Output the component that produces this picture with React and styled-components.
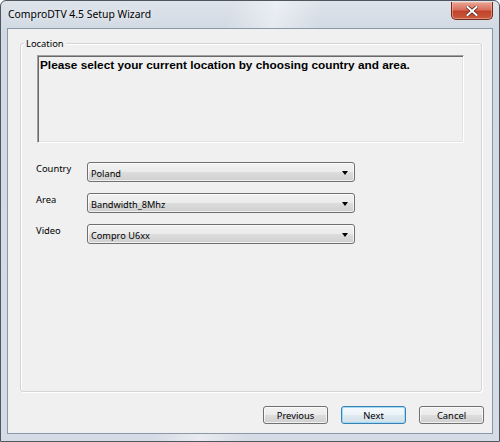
import React from "react";
import styled, { createGlobalStyle } from "styled-components";

const Global = createGlobalStyle`
  html, body { margin: 0; padding: 0; background: #ffffff; }
  body { font-family: "Noto Sans", "Liberation Sans", sans-serif; }
`;

const Window = styled.div`
  width: 500px;
  height: 442px;
  box-sizing: border-box;
  border: 1px solid #50565e;
  border-radius: 6px 6px 0 0;
  background:
    linear-gradient(100deg, rgba(255,255,255,0) 40%, rgba(255,255,255,0.45) 48%, rgba(255,255,255,0) 56%),
    linear-gradient(180deg, #dde3ea 0%, #d1d9e3 30px, #d5dce5 100%);
  padding: 0 6px 7px;
  display: flex;
  flex-direction: column;
  overflow: hidden;
`;

const TitleBar = styled.div`
  height: 27px;
  display: flex;
  justify-content: space-between;
  align-items: flex-start;
  flex-shrink: 0;
`;

const Title = styled.div`
  font-family: "Noto Sans", sans-serif;
  font-size: 10.4px;
  color: #000;
  line-height: 27px;
  padding-left: 1px;
  text-shadow: 0 0 6px rgba(255,255,255,0.9);
`;

const CloseButton = styled.div`
  margin-top: 1px;
  width: 42px;
  height: 18px;
  box-sizing: border-box;
  border: 1px solid #6e2a20;
  border-top: none;
  border-radius: 0 0 5px 5px;
  background: linear-gradient(180deg, #e9a594 0%, #d9705d 45%, #c2422a 55%, #c85a3d 100%);
  box-shadow: inset 0 0 0 1px rgba(255,200,180,0.5);
  display: flex;
  align-items: center;
  justify-content: center;
`;

const Client = styled.div`
  flex: 1;
  border: 1px solid #8b98a8;
  background: #f0f0f0;
  display: flex;
  flex-direction: column;
  padding: 14px 8px 9px 12px;
`;

const GroupBox = styled.div`
  position: relative;
  height: 349px;
  box-sizing: border-box;
  margin-right: 2px;
  border: 1px solid #d5d5d5;
  border-radius: 3px;
  box-shadow: inset 1px 1px 0 #fff, 1px 1px 0 #fff;
  padding: 11px 0 0 15px;
`;

const Legend = styled.span`
  position: absolute;
  top: -7px;
  left: 3px;
  padding: 0 2px;
  background: #f0f0f0;
  font-size: 9.4px;
  line-height: 13px;
  color: #000;
`;

const Description = styled.div`
  width: 427px;
  height: 88px;
  margin-left: 1px;
  box-sizing: border-box;
  border-style: solid;
  border-width: 1px;
  border-color: #a0a0a0 #ffffff #ffffff #a0a0a0;
  box-shadow: inset 1px 1px 0 #696969, inset -1px -1px 0 #e3e3e3;
  padding: 2px 2px;
  font-family: "Liberation Sans", Arial, sans-serif;
  font-weight: bold;
  font-size: 11.8px;
  line-height: 14px;
  color: #000;
`;

const Fields = styled.div`
  margin-top: 19px;
  display: grid;
  grid-template-columns: 51px 268px;
  row-gap: 11px;
`;

const Label = styled.div`
  font-size: 9.4px;
  line-height: 13px;
  color: #000;
  padding-top: 0px;
`;

const Combo = styled.div`
  height: 20px;
  box-sizing: border-box;
  border: 1px solid #707070;
  border-radius: 3px;
  background: linear-gradient(180deg, #f2f2f2 0%, #ebebeb 50%, #dddddd 50%, #cfcfcf 100%);
  box-shadow: inset 0 0 0 1px rgba(255,255,255,0.7);
  display: flex;
  align-items: center;
  justify-content: space-between;
  padding: 2px 6px 0 3px;
  font-size: 9.2px;
  color: #000;
`;

const Arrow = styled.span`
  width: 0;
  height: 0;
  border-left: 3.5px solid transparent;
  border-right: 3.5px solid transparent;
  border-top: 4px solid #000;
`;

const Footer = styled.div`
  margin-top: 14px;
  display: flex;
  justify-content: flex-end;
  gap: 13px;
`;

const Button = styled.button`
  width: 65px;
  height: 18px;
  box-sizing: border-box;
  border: 1px solid ${(p) => (p.$default ? "#3c7fb1" : "#707070")};
  border-radius: 3px;
  background: ${(p) =>
    p.$default
      ? "linear-gradient(180deg, #f4f9fc 0%, #ecf4f9 50%, #dfeaf1 50%, #d3e0e8 100%)"
      : "linear-gradient(180deg, #f2f2f2 0%, #ebebeb 50%, #dddddd 50%, #cfcfcf 100%)"};
  box-shadow: ${(p) =>
    p.$default ? "inset 0 0 0 1px #9ddcf6" : "inset 0 0 0 1px rgba(255,255,255,0.7)"};
  font-family: "Noto Sans", sans-serif;
  font-size: 9.4px;
  line-height: 13px;
  color: #000;
  padding: 0;
  display: flex;
  align-items: center;
  justify-content: center;
`;

const fields = [
  { label: "Country", value: "Poland" },
  { label: "Area", value: "Bandwidth_8Mhz" },
  { label: "Video", value: "Compro U6xx" },
];

export default function App() {
  return (
    <>
      <Global />
      <Window>
        <TitleBar>
          <Title>ComproDTV 4.5 Setup Wizard</Title>
          <CloseButton>
            <svg width="12" height="10" viewBox="0 0 12 10">
              <path
                d="M1.5 1 L10.5 9 M10.5 1 L1.5 9"
                stroke="#5a2a22"
                strokeWidth="3.6"
                strokeLinecap="square"
              />
              <path
                d="M1.5 1 L10.5 9 M10.5 1 L1.5 9"
                stroke="#ffffff"
                strokeWidth="2"
                strokeLinecap="square"
              />
            </svg>
          </CloseButton>
        </TitleBar>
        <Client>
          <GroupBox>
            <Legend>Location</Legend>
            <Description>
              Please select your current location by choosing country and area.
            </Description>
            <Fields>
              {fields.map((f) => (
                <React.Fragment key={f.label}>
                  <Label>{f.label}</Label>
                  <Combo>
                    <span>{f.value}</span>
                    <Arrow />
                  </Combo>
                </React.Fragment>
              ))}
            </Fields>
          </GroupBox>
          <Footer>
            <Button>Previous</Button>
            <Button $default>Next</Button>
            <Button>Cancel</Button>
          </Footer>
        </Client>
      </Window>
    </>
  );
}
